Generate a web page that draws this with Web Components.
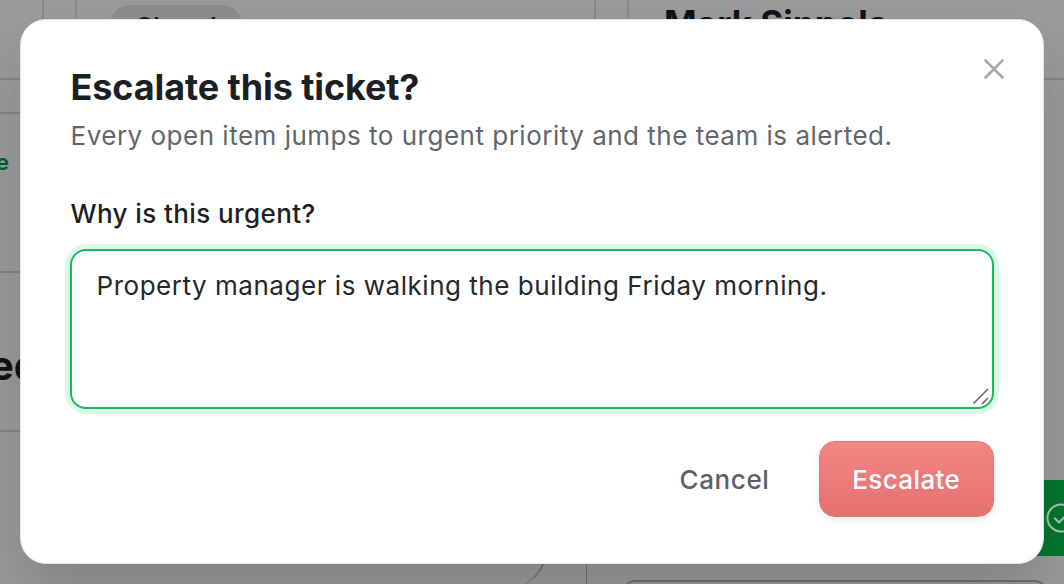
<!DOCTYPE html>
<html lang="en">
<head>
<meta charset="utf-8">
<title>Escalate this ticket?</title>
<style>
  html, body { margin: 0; height: 100%; }
  body { font-family: 'Inter', 'Liberation Sans', sans-serif; overflow: hidden; }
</style>
</head>
<body>
<page-backdrop>
  <escalate-dialog heading="Escalate this ticket?" sub="Every open item jumps to urgent priority and the team is alerted.">
    <note-field label="Why is this urgent?">Property manager is walking the building Friday morning.</note-field>
    <dialog-button slot="actions" variant="ghost">Cancel</dialog-button>
    <dialog-button slot="actions" variant="danger">Escalate</dialog-button>
  </escalate-dialog>
</page-backdrop>

<script>
class PageBackdrop extends HTMLElement {
  connectedCallback() {
    const shadow = this.attachShadow({ mode: 'open' })
    shadow.innerHTML = `
      <style>
        :host {
          display: flex;
          align-items: center;
          justify-content: center;
          position: relative;
          width: 1064px;
          height: 584px;
          overflow: hidden;
          background: #9b9b9b;
        }
        .page { position: absolute; inset: 0; }
        .page > * { position: absolute; }
        .v { width: 2px; background: #8a8a8a; }
        .h { height: 2px; background: #858585; }
        .pill {
          left: 110px; top: 5px; width: 132px; height: 40px;
          border-radius: 20px;
          background: #8b8e8e;
          text-align: center;
          font-size: 24px; font-weight: 600; line-height: 44px;
          color: #1a1c1e;
        }
        .name { left: 664px; top: 3px; font-size: 35px; font-weight: 700; line-height: 40px; color: #111315; white-space: nowrap; }
        .tail { left: -4px; top: 150px; font-size: 22px; font-weight: 600; line-height: 24px; color: #05602c; white-space: nowrap; }
        .word { left: -10px; top: 340px; font-size: 40px; font-weight: 700; line-height: 52px; color: #111315; white-space: nowrap; }
        .toast {
          left: 960px; top: 480px; width: 130px; height: 76px;
          background: #05772f;
        }
        .check { left: 1046px; top: 503px; width: 30px; height: 30px; }
        .corner {
          left: 380px; top: 500px; width: 166px; height: 90px;
          border-right: 2px solid #727272;
          border-bottom-right-radius: 44px;
        }
        .box {
          left: 623px; top: 580px; width: 420px; height: 40px;
          border: 2px solid #727272;
          border-radius: 12px;
        }
        ::slotted(*) { position: relative; z-index: 1; margin-bottom: 1px; }
      </style>
      <div class="page">
        <div class="v" style="left:42px;top:0;height:30px"></div>
        <div class="v" style="left:75px;top:0;height:30px"></div>
        <div class="v" style="left:594px;top:0;height:30px"></div>
        <div class="v" style="left:627px;top:0;height:30px"></div>
        <div class="v" style="left:586px;top:540px;height:44px;width:1px;background:#727272"></div>
        <div class="h" style="left:0;top:78px;width:30px"></div>
        <div class="h" style="left:0;top:112px;width:30px"></div>
        <div class="h" style="left:0;top:271px;width:30px"></div>
        <div class="h" style="left:0;top:430px;width:30px"></div>
        <div class="h" style="left:1030px;top:78px;width:34px"></div>
        <div class="pill">Closed</div>
        <div class="name">Mark Sippola</div>
        <div class="tail">e</div>
        <div class="word">ed</div>
        <div class="toast"></div>
        <svg class="check" viewBox="0 0 30 30" fill="none" stroke="#a9c9b4" stroke-width="2">
          <circle cx="15" cy="15" r="13.5"/>
          <path d="M9 15.5l4 4 8-8" stroke-linecap="round" stroke-linejoin="round"/>
        </svg>
        <div class="corner"></div>
        <div class="box"></div>
      </div>
      <slot></slot>
    `
  }
}

class EscalateDialog extends HTMLElement {
  connectedCallback() {
    const shadow = this.attachShadow({ mode: 'open' })
    shadow.innerHTML = `
      <style>
        :host {
          display: flex;
          flex-direction: column;
          position: relative;
          box-sizing: border-box;
          width: 1024px;
          height: 545px;
          padding: 45px 49px 46px 48.5px;
          background: #fff;
          border: 1.5px solid #e4e6e6;
          border-radius: 26px;
          box-shadow: 0 30px 60px rgba(0, 0, 0, 0.16);
          color: #1c1f23;
        }
        h2 {
          margin: 0;
          padding-left: 1px;
          font-size: 36px;
          line-height: 44px;
          font-weight: 700;
          letter-spacing: -0.1px;
        }
        p {
          margin: 8px 0 0;
          padding-left: 1px;
          font-size: 26px;
          line-height: 38px;
          letter-spacing: 0.5px;
          color: #62666c;
        }
        .body { margin-top: 42px; flex: 1; }
        .actions {
          display: flex;
          justify-content: flex-end;
          align-items: center;
          gap: 33px;
        }
        .close {
          position: absolute;
          top: 38px;
          right: 38px;
          width: 22px;
          height: 22px;
        }
      </style>
      <h2></h2>
      <p></p>
      <div class="body"><slot></slot></div>
      <div class="actions"><slot name="actions"></slot></div>
      <svg class="close" viewBox="0 0 22 22" fill="none" stroke="#a8a8a8" stroke-width="2.6" stroke-linecap="round">
        <path d="M2.5 2.5l17 17M19.5 2.5l-17 17"/>
      </svg>
    `
    shadow.querySelector('h2').textContent = this.getAttribute('heading')
    shadow.querySelector('p').textContent = this.getAttribute('sub')
  }
}

class NoteField extends HTMLElement {
  connectedCallback() {
    const shadow = this.attachShadow({ mode: 'open' })
    shadow.innerHTML = `
      <style>
        :host { display: block; }
        label {
          display: block;
          padding-left: 1px;
          font-size: 26px;
          line-height: 34px;
          font-weight: 500;
          letter-spacing: 0.4px;
          margin-bottom: 18px;
        }
        .area {
          position: relative;
          box-sizing: border-box;
          height: 160px;
          padding: 16px 25px;
          border: 2px solid #18b85e;
          border-radius: 16px;
          box-shadow: 0 0 0 5px #dcf8e6;
          font-size: 26px;
          line-height: 38px;
          letter-spacing: 0.53px;
          color: #24272b;
        }
        .grip {
          position: absolute;
          right: 2px;
          bottom: 1px;
          width: 18px;
          height: 18px;
        }
      </style>
      <label></label>
      <div class="area">
        <slot></slot>
        <svg class="grip" viewBox="0 0 18 18" fill="none" stroke="#6b6b6b" stroke-width="1.6">
          <path d="M1.5 15.5L16 1M10 16l6-6"/>
        </svg>
      </div>
    `
    shadow.querySelector('label').textContent = this.getAttribute('label')
  }
}

class DialogButton extends HTMLElement {
  connectedCallback() {
    const shadow = this.attachShadow({ mode: 'open' })
    shadow.innerHTML = `
      <style>
        :host {
          display: inline-flex;
          align-items: center;
          justify-content: center;
          box-sizing: border-box;
          height: 76px;
          font-size: 26px;
          font-weight: 500;
          border-radius: 16px;
        }
        :host([variant="ghost"]) {
          width: 122px;
          color: #5c6066;
          letter-spacing: 0.6px;
        }
        :host([variant="danger"]) {
          width: 175.5px;
          color: #fff;
          letter-spacing: 0.4px;
          background: linear-gradient(#f48686, #e47070);
          border: 1.5px solid #dd7676;
          box-shadow: 0 3px 8px rgba(0, 0, 0, 0.08);
        }
      </style>
      <slot></slot>
    `
  }
}

customElements.define('page-backdrop', PageBackdrop)
customElements.define('escalate-dialog', EscalateDialog)
customElements.define('note-field', NoteField)
customElements.define('dialog-button', DialogButton)
</script>
</body>
</html>
